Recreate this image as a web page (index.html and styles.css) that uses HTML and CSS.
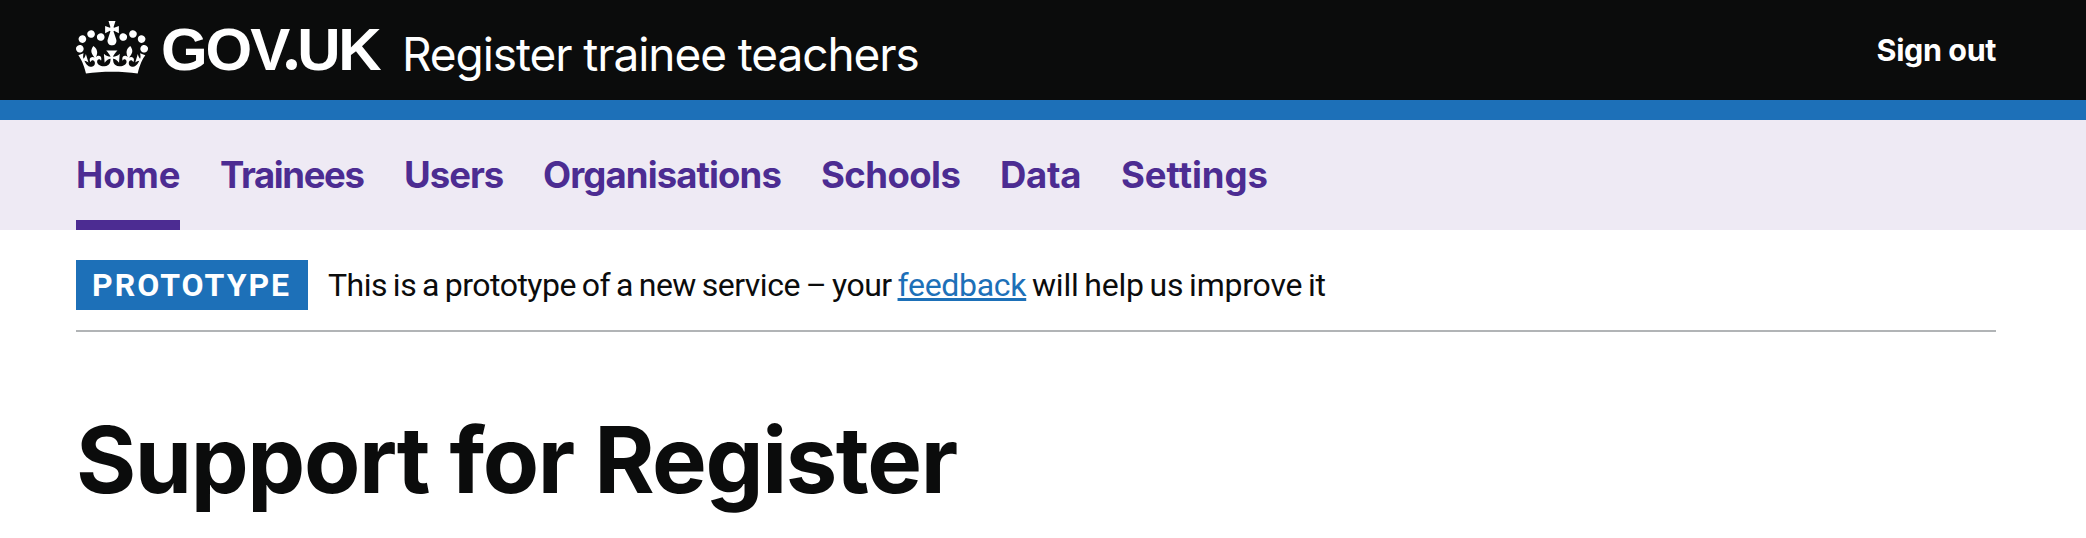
FILE: index.html
```
<!DOCTYPE html>
<html lang="en">
<head>
<meta charset="utf-8">
<title>Support for Register</title>
<link rel="stylesheet" href="styles.css">
</head>
<body>
<header class="header">
  <div class="header-inner container">
    <svg class="crown" viewBox="0 0 132 97" aria-hidden="true"><path fill="currentColor" fill-rule="evenodd" d="M25 30.2c3.5 1.5 7.7-.2 9.1-3.7 1.5-3.6-.2-7.8-3.9-9.2-3.6-1.4-7.6.3-9.1 3.9-1.4 3.5.3 7.5 3.9 9zM9 39.5c3.6 1.5 7.8-.2 9.2-3.7 1.5-3.6-.2-7.8-3.9-9.1-3.6-1.5-7.6.2-9.1 3.8-1.4 3.5.3 7.5 3.8 9zM4.4 57.2c3.5 1.5 7.7-.2 9.1-3.8 1.5-3.6-.2-7.7-3.9-9.1-3.5-1.5-7.6.3-9.1 3.8-1.4 3.5.3 7.6 3.9 9.1zm38.3-21.4c3.5 1.5 7.7-.2 9.1-3.8 1.5-3.6-.2-7.7-3.9-9.1-3.6-1.5-7.6.3-9.1 3.8-1.3 3.6.4 7.7 3.9 9.1zm64.4-5.6c-3.6 1.5-7.8-.2-9.1-3.7-1.5-3.6.2-7.8 3.8-9.2 3.6-1.4 7.7.3 9.2 3.9 1.3 3.5-.4 7.5-3.9 9zm15.9 9.3c-3.6 1.5-7.7-.2-9.1-3.7-1.5-3.6.2-7.8 3.7-9.1 3.6-1.5 7.7.2 9.2 3.8 1.5 3.5-.3 7.5-3.8 9zm4.7 17.7c-3.6 1.5-7.8-.2-9.2-3.8-1.5-3.6.2-7.7 3.9-9.1 3.6-1.5 7.7.3 9.2 3.8 1.3 3.5-.4 7.6-3.9 9.1zM89.3 35.8c-3.6 1.5-7.8-.2-9.2-3.8-1.4-3.6.2-7.7 3.9-9.1 3.6-1.5 7.7.3 9.2 3.8 1.4 3.6-.3 7.7-3.9 9.1zM69.7 17.7l8.9 4.7V9.3l-8.9 2.8c-.2-.3-.5-.6-.9-.9L72.4 0H59.6l3.5 11.2c-.3.3-.6.5-.9.9l-8.8-2.8v13.1l8.8-4.7c.3.3.6.7.9.9l-5 15.4v.1c-.2.8-.4 1.6-.4 2.4 0 4.1 3.1 7.5 7 8.1h.2c.3 0 .7.1 1 .1.4 0 .7 0 1-.1h.2c4-.6 7.1-4.1 7.1-8.1 0-.8-.1-1.7-.4-2.4V34l-5.1-15.4c.4-.2.7-.6 1-.9zM66 92.8c16.9 0 32.8 1.1 47.1 3.2 4-16.9 8.9-26.7 14-33.5l-9.6-3.4c1 4.9 1.1 7.2 0 10.2-1.5-1.4-3-4.3-4.2-8.7L108.6 76c2.8-2 5-3.2 7.5-3.3-4.4 9.4-10 11.9-13.6 11.2-4.3-.8-6.3-4.6-5.6-7.9 1-4.7 5.7-5.9 8-.5 4.3-8.7-3-11.4-7.6-8.8 7.1-7.2 7.9-13.5 2.1-21.1-8 6.1-8.1 12.3-4.5 20.8-4.7-5.4-12.1-2.5-9.5 6.2 3.4-5.2 7.9-2 7.2 3.1-.6 4.3-6.4 7.8-13.5 7.2-10.3-.9-10.9-8-11.2-13.8 2.5-.5 7.1 1.8 11 7.3L80.2 60c-4.1 4.4-8 5.3-12.3 5.4 1.4-4.4 8-11.6 8-11.6H55.5s6.4 7.2 7.9 11.6c-4.2-.1-8-1-12.3-5.4l1.4 16.4c3.9-5.5 8.5-7.7 10.9-7.3-.3 5.8-.9 12.8-11.1 13.8-7.2.6-12.9-2.9-13.5-7.2-.7-5 3.8-8.3 7.1-3.1 2.7-8.7-4.6-11.6-9.4-6.2 3.7-8.5 3.6-14.7-4.6-20.8-5.8 7.6-5 13.9 2.2 21.1-4.7-2.6-11.9.1-7.7 8.8 2.3-5.5 7.1-4.2 8.1.5.7 3.3-1.3 7.1-5.7 7.9-3.5.7-9-1.8-13.5-11.2 2.5.1 4.7 1.3 7.5 3.3l-4.7-15.4c-1.2 4.4-2.7 7.2-4.3 8.7-1.1-3-.9-5.3 0-10.2l-9.5 3.4c5 6.9 9.9 16.7 14 33.5 14.8-2.1 30.8-3.2 47.7-3.2z"/></svg>
    <span class="logotype">GOV<span class="dot">.</span>UK</span>
    <span class="product">Register trainee teachers</span>
    <a class="sign-out">Sign out</a>
  </div>
</header>
<nav class="nav">
  <div class="nav-list container">
    <a class="nav-item home current">Home</a>
    <a class="nav-item trainees">Trainees</a>
    <a class="nav-item users">Users</a>
    <a class="nav-item organisations">Organisations</a>
    <a class="nav-item schools">Schools</a>
    <a class="nav-item data">Data</a>
    <a class="nav-item settings">Settings</a>
  </div>
</nav>
<div class="container">
  <div class="phase-banner">
    <strong class="tag">PROTOTYPE</strong>
    <p class="phase-text"><span class="lead">This is a prototype of a new service – your </span><a class="link">feedback</a><span class="tail"> will help us improve it</span></p>
  </div>
  <main class="main">
    <h1 class="heading">Support for Register</h1>
  </main>
</div>
</body>
</html>
```
FILE: styles.css
```
* { box-sizing: border-box; }
body {
  margin: 0;
  background: #fff;
  color: #0b0c0c;
  font-family: Inter, "Noto Sans", sans-serif;
  white-space: nowrap;
}
.container { margin: 0 76px; width: 1920px; }

.header { background: #0b0c0c; color: #fff; border-bottom: 20px solid #1d70b8; height: 120px; }
.header-inner { display: flex; align-items: flex-start; height: 100px; }
.crown { width: 72px; height: 53px; margin-top: 21px; flex: none; }
.logotype {
  width: 242px;
  padding-left: 13px;
  margin-top: 16px;
  font: bold 60px/68px "Liberation Sans", Arial, sans-serif;
  letter-spacing: -2.1px;
}
.dot { position: relative; color: transparent; }
.dot::after {
  content: "";
  position: absolute;
  left: 3px;
  bottom: 13px;
  width: 11px;
  height: 11px;
  border-radius: 50%;
  background: #fff;
}
.product { margin: 24px 0 0 12px; font-size: 46px; line-height: 60px; letter-spacing: -1.08px; }
.sign-out { margin: 30px 0 0 auto; font-size: 30.5px; font-weight: 700; line-height: 40px; letter-spacing: -0.4px; }

.nav { background: #eeeaf4; }
.nav-list { display: flex; gap: 40px; height: 110px; }
.nav-item {
  height: 110px;
  padding-top: 30px;
  font-size: 36.5px;
  font-weight: 700;
  line-height: 50px;
  color: #4c2c92;
}
.current { border-bottom: 10px solid #4c2c92; }
.home { width: 104px; letter-spacing: -0.1px; }
.trainees { width: 144px; letter-spacing: -1.35px; }
.users { width: 99px; letter-spacing: -1px; }
.organisations { width: 238px; letter-spacing: -0.88px; }
.schools { width: 139px; letter-spacing: -0.55px; }
.data { width: 81px; letter-spacing: -0.3px; }
.settings { width: 147px; letter-spacing: -0.03px; }

.phase-banner {
  display: flex;
  gap: 20px;
  padding: 30px 0 20px;
  border-bottom: 2px solid #b1b4b6;
}
.tag {
  width: 232px;
  height: 50px;
  padding-left: 16px;
  background: #1d70b8;
  color: #fff;
  font: bold 32px/50px Roboto, sans-serif;
  letter-spacing: 2px;
}
.phase-text { margin: 0; font: 32px/50px Roboto, sans-serif; white-space: pre; }
.lead { letter-spacing: -0.5px; word-spacing: -1.6px; }
.link {
  color: #1d70b8;
  letter-spacing: -0.3px;
  text-decoration: underline;
  text-decoration-thickness: 3px;
  text-underline-offset: 2px;
  text-decoration-skip-ink: none;
}
.tail { letter-spacing: -0.2px; word-spacing: -2px; }

.main { padding: 78px 0 28px; }
.heading { margin: 0; font-size: 92px; font-weight: 700; line-height: 100px; letter-spacing: -1.4px; }
```
